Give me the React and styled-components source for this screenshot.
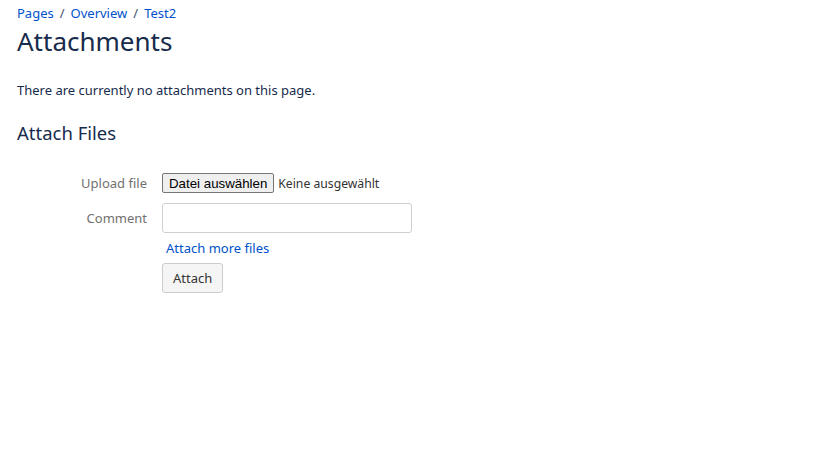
import React from "react";
import styled, { createGlobalStyle } from "styled-components";

const Global = createGlobalStyle`
  html, body { margin: 0; padding: 0; background: #fff; }
  body { font-family: "Noto Sans", "Open Sans", sans-serif; color: #172b4d; }
`;

const Page = styled.div`
  padding: 3px 17px 0 17px;
`;

const Breadcrumbs = styled.nav`
  display: flex;
  align-items: center;
  gap: 6px;
  font-size: 13px;
  line-height: 20px;
  color: #42526e;
`;

const Crumb = styled.a`
  color: #0052cc;
  text-decoration: none;
`;

const Title = styled.h1`
  margin: 0;
  font-size: 26px;
  font-weight: 400;
  line-height: 36px;
  color: #172b4d;
`;

const Paragraph = styled.p`
  margin: 21px 0 0 0;
  font-size: 13px;
  line-height: 20px;
`;

const Subtitle = styled.h2`
  margin: 19px 0 0 0;
  font-size: 18.5px;
  font-weight: 400;
  line-height: 28px;
  color: #172b4d;
`;

const Form = styled.form`
  margin-top: 26px;
  display: grid;
  grid-template-columns: 130px auto;
  column-gap: 15px;
  row-gap: 10px;
  align-items: center;
  justify-content: start;
`;

const Label = styled.label`
  font-size: 13px;
  color: #707070;
  text-align: right;
`;

const FileRow = styled.div`
  display: flex;
  align-items: center;
  gap: 4px;
`;

const NativeButton = styled.button`
  font-family: "Liberation Sans", Arial, sans-serif;
  font-size: 13.3px;
  height: 20px;
  padding: 0 6px;
  border: 1px solid #767676;
  border-radius: 2px;
  background: #efefef;
  color: #000;
`;

const FileStatus = styled.span`
  font-size: 12.2px;
  color: #333;
`;

const TextInput = styled.input`
  box-sizing: border-box;
  width: 250px;
  height: 30px;
  border: 1px solid #cfcfcf;
  border-radius: 3px;
  padding: 0 6px;
`;

const MoreLink = styled.a`
  grid-column: 2;
  margin: -5px 0 -5px 4px;
  font-size: 13px;
  color: #0052cc;
  text-decoration: none;
  line-height: 20px;
`;

const SubmitCell = styled.div`
  grid-column: 2;
`;

const SubmitButton = styled.button`
  font-family: "Noto Sans", sans-serif;
  font-size: 13px;
  height: 30px;
  padding: 0 10px;
  border: 1px solid #ccc;
  border-radius: 3px;
  background: #f5f5f5;
  color: #333;
`;

export default function App() {
  return (
    <>
      <Global />
      <Page>
        <Breadcrumbs>
          <Crumb href="#">Pages</Crumb>
          <span>/</span>
          <Crumb href="#">Overview</Crumb>
          <span>/</span>
          <Crumb href="#">Test2</Crumb>
        </Breadcrumbs>
        <Title>Attachments</Title>
        <Paragraph>There are currently no attachments on this page.</Paragraph>
        <Subtitle>Attach Files</Subtitle>
        <Form onSubmit={(e) => e.preventDefault()}>
          <Label>Upload file</Label>
          <FileRow>
            <NativeButton type="button">Datei auswählen</NativeButton>
            <FileStatus>Keine ausgewählt</FileStatus>
          </FileRow>
          <Label>Comment</Label>
          <TextInput type="text" />
          <MoreLink href="#">Attach more files</MoreLink>
          <SubmitCell>
            <SubmitButton type="submit">Attach</SubmitButton>
          </SubmitCell>
        </Form>
      </Page>
    </>
  );
}
